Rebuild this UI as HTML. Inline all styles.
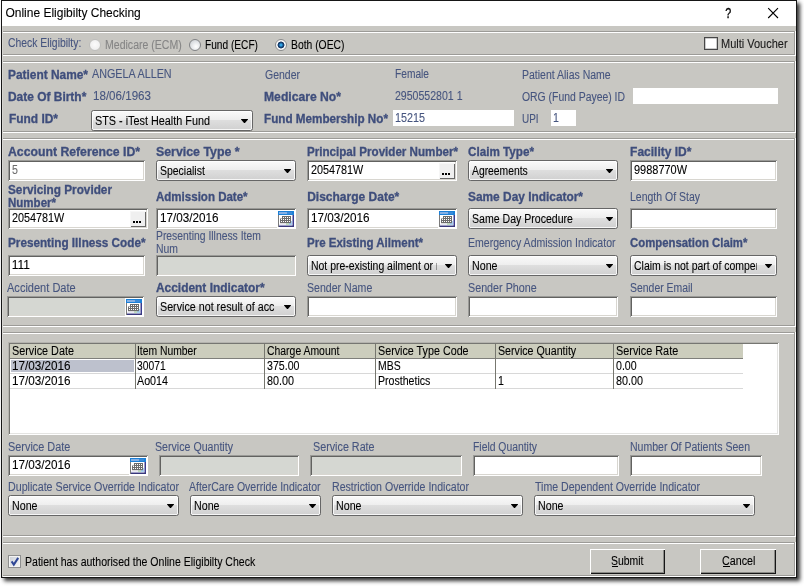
<!DOCTYPE html>
<html lang="en"><head><meta charset="utf-8"><title>Online Eligibilty Checking</title>
<style>
*{margin:0;padding:0;box-sizing:border-box}
html,body{width:804px;height:586px;background:#fff;overflow:hidden}
body{position:relative;font-family:"Liberation Sans",Arial,sans-serif;font-size:12px;line-height:14px;color:#000}
#win{position:absolute;left:1px;top:0;width:796px;height:578px;background:#c8c7c2;border:1px solid #161616;box-shadow:3px 3px 4px rgba(0,0,0,.8)}
#ttl{position:absolute;left:0;top:0;width:794px;height:25px;background:#fff}
#c{position:absolute;left:0;top:0;width:804px;height:586px;will-change:transform}
#c>div,#c>svg,#c>span{position:absolute}
.t{position:absolute;white-space:nowrap;transform-origin:0 0;height:14px;line-height:14px;-webkit-text-stroke:.1px}
.clip{position:absolute;overflow:hidden;height:16px}
.clip .t{left:0;top:0}
.rd{width:12px;height:12px;border-radius:50%;border:1px solid #8b8c8c}
.cb{background:linear-gradient(135deg,#c9cdd5 0,#dfe2e6 45%,#f6f6f6 100%);border:1px solid #8e8f8f;box-shadow:inset 0 0 0 1px #f4f4f4}
.cb2{background:#fff;border:1px solid #474747;box-shadow:inset 0 0 0 .5px #9a9a9a}
.cb svg{position:absolute}
.tb{background:#fff;box-shadow:inset 1px 1px 0 #9a9a97, inset -1px -1px 0 #fff, inset 2px 2px 0 #626260, inset -2px -2px 0 #d8d6d0}
.tb.dis{background:#d5d7d2}
.co{border:1px solid #666;border-radius:2.5px;background:linear-gradient(#fafafa 0,#eeeeee 46%,#dedede 50%,#d0d0d0 100%);box-shadow:inset 0 0 0 1px rgba(255,255,255,.8)}
.co i{position:absolute;width:7.8px;height:4.4px;margin-left:-.4px;background:#000;clip-path:polygon(0 0,100% 0,50% 100%)}
.bt{background:#efefef;box-shadow:inset 1px 1px 0 #f6f6f6, inset -1px -1px 0 #686868}
.bt b{position:absolute;top:10px;width:2px;height:2px;background:#000}
.btn{background:#c8c7c2;box-shadow:inset 1px 1px 0 #fff, inset -1px -1px 0 #161616, inset -2px -2px 0 #8a8a86}
</style></head>
<body>
<div id="win"><div id="ttl"></div></div>
<div id="c">
<span class="t" style="left:5.4px;top:6.3px;">Online Eligibilty Checking</span>
<svg style="left:724px;top:7px" width="60" height="14" viewBox="0 0 60 14">
<text x="1.3" y="11.4" font-family="Liberation Sans, sans-serif" font-size="14.2" fill="#000" stroke="#000" stroke-width=".35" transform="scale(.76 1)" style="transform-origin:1.3px 0">?</text>
<path d="M44.2 1.2 L54 11 M54 1.2 L44.2 11" stroke="#000" stroke-width="1.1" fill="none"/></svg>
<div style="left:3px;top:31px;width:792px;height:1px;background:#9c9b97"></div>
<div style="left:3px;top:32px;width:791px;height:1px;background:#ffffff"></div>
<div style="left:3px;top:54px;width:792px;height:1px;background:#9c9b97"></div>
<div style="left:3px;top:55px;width:793px;height:1px;background:#ffffff"></div>
<div style="left:794px;top:31px;width:1px;height:24px;background:#9c9b97"></div>
<div style="left:795px;top:31px;width:1px;height:25px;background:#ffffff"></div>
<div style="left:3px;top:61px;width:792px;height:1px;background:#9c9b97"></div>
<div style="left:3px;top:62px;width:791px;height:1px;background:#ffffff"></div>
<div style="left:3px;top:131px;width:792px;height:1px;background:#9c9b97"></div>
<div style="left:3px;top:132px;width:793px;height:1px;background:#ffffff"></div>
<div style="left:794px;top:61px;width:1px;height:71px;background:#9c9b97"></div>
<div style="left:795px;top:61px;width:1px;height:72px;background:#ffffff"></div>
<div style="left:3px;top:138px;width:792px;height:1px;background:#9c9b97"></div>
<div style="left:3px;top:139px;width:791px;height:1px;background:#ffffff"></div>
<div style="left:3px;top:325px;width:792px;height:1px;background:#9c9b97"></div>
<div style="left:3px;top:326px;width:793px;height:1px;background:#ffffff"></div>
<div style="left:794px;top:138px;width:1px;height:188px;background:#9c9b97"></div>
<div style="left:795px;top:138px;width:1px;height:189px;background:#ffffff"></div>
<div style="left:3px;top:332px;width:792px;height:1px;background:#9c9b97"></div>
<div style="left:3px;top:333px;width:791px;height:1px;background:#ffffff"></div>
<div style="left:3px;top:535px;width:792px;height:1px;background:#9c9b97"></div>
<div style="left:3px;top:536px;width:793px;height:1px;background:#ffffff"></div>
<div style="left:794px;top:332px;width:1px;height:204px;background:#9c9b97"></div>
<div style="left:795px;top:332px;width:1px;height:205px;background:#ffffff"></div>
<div style="left:3px;top:542px;width:792px;height:1px;background:#9c9b97"></div>
<div style="left:3px;top:543px;width:791px;height:1px;background:#ffffff"></div>
<div style="left:3px;top:575px;width:792px;height:1px;background:#9c9b97"></div>
<div style="left:3px;top:576px;width:793px;height:1px;background:#ffffff"></div>
<div style="left:794px;top:542px;width:1px;height:34px;background:#9c9b97"></div>
<div style="left:795px;top:542px;width:1px;height:35px;background:#ffffff"></div>
<div style="left:2px;top:26px;width:1px;height:551px;background:#d6d5d1"></div>
<span class="t" style="left:8.0px;top:36.3px;transform:scaleX(0.8654);color:#46557f;">Check Eligibilty:</span>
<div class="rd" style="left:89px;top:39px;border-color:#bdbdbb;background:radial-gradient(circle at 50% 45%,#fbfbfb 0,#efefef 70%,#e6e6e6 100%)"></div>
<span class="t" style="left:105.1px;top:38.0px;transform:scaleX(0.8791);color:#858585;">Medicare (ECM)</span>
<div class="rd" style="left:189px;top:39px;border-color:#808284;background:radial-gradient(circle at 60% 65%,#ffffff 0,#e9ebed 40%,#c3c7cc 100%)"></div>
<span class="t" style="left:205.0px;top:38.0px;transform:scaleX(0.8455);">Fund (ECF)</span>
<div class="rd" style="left:275px;top:39px;border-color:#8b8c8c;background:radial-gradient(circle at 50% 50%,#3cb8f0 0,#2b9be0 1.1px,#1a4a7e 2.1px,#123661 3.1px,#fafafa 3.8px,#eeeeee 100%)"></div>
<span class="t" style="left:291.1px;top:38.0px;transform:scaleX(0.8627);">Both (OEC)</span>
<div class="cb2" style="left:704px;top:37px;width:14px;height:13px;"></div>
<span class="t" style="left:721.1px;top:37.4px;transform:scaleX(0.9161);color:#1a1a1a;">Multi Voucher</span>
<span class="t" style="left:7.9px;top:68.0px;transform:scaleX(0.9913);font-weight:bold;-webkit-text-stroke:.3px;color:#3f4e7c;">Patient Name*</span>
<span class="t" style="left:92.1px;top:66.5px;transform:scaleX(0.8972);color:#46557f;">ANGELA ALLEN</span>
<span class="t" style="left:7.9px;top:90.0px;transform:scaleX(0.9951);font-weight:bold;-webkit-text-stroke:.3px;color:#3f4e7c;">Date Of Birth*</span>
<span class="t" style="left:92.6px;top:88.5px;transform:scaleX(0.9657);color:#46557f;">18/06/1963</span>
<span class="t" style="left:9.2px;top:112.0px;transform:scaleX(0.9933);font-weight:bold;-webkit-text-stroke:.3px;color:#3f4e7c;">Fund ID*</span>
<div class="co" style="left:91px;top:110px;width:162px;height:21px"><i style="left:149px;top:8px"></i></div>
<span class="t" style="left:94.7px;top:114.0px;transform:scaleX(0.9027);">STS - iTest Health Fund</span>
<span class="t" style="left:264.9px;top:68.0px;transform:scaleX(0.8743);color:#46557f;">Gender</span>
<span class="t" style="left:264.0px;top:90.0px;transform:scaleX(1.0127);font-weight:bold;-webkit-text-stroke:.3px;color:#3f4e7c;">Medicare No*</span>
<span class="t" style="left:264.0px;top:112.0px;transform:scaleX(0.9737);font-weight:bold;-webkit-text-stroke:.3px;color:#3f4e7c;">Fund Membership No*</span>
<span class="t" style="left:395.1px;top:67.0px;transform:scaleX(0.8497);color:#46557f;">Female</span>
<span class="t" style="left:395.1px;top:89.0px;transform:scaleX(0.8795);color:#46557f;">2950552801 1</span>
<div style="left:393px;top:110px;width:121px;height:16px;background:#fff"></div>
<span class="t" style="left:395.1px;top:111.0px;transform:scaleX(0.8989);color:#46557f;">15215</span>
<span class="t" style="left:521.6px;top:68.0px;transform:scaleX(0.8748);color:#46557f;">Patient Alias Name</span>
<span class="t" style="left:521.6px;top:90.0px;transform:scaleX(0.8676);color:#46557f;">ORG (Fund Payee) ID</span>
<div style="left:633px;top:88px;width:145px;height:16px;background:#fff"></div>
<span class="t" style="left:521.6px;top:112.0px;transform:scaleX(0.8294);color:#46557f;">UPI</span>
<div style="left:551px;top:110px;width:25px;height:16px;background:#fff"></div>
<span class="t" style="left:553.3px;top:111.0px;transform:scaleX(0.8850);color:#46557f;">1</span>
<span class="t" style="left:7.5px;top:145.0px;transform:scaleX(1.0203);font-weight:bold;-webkit-text-stroke:.3px;color:#3f4e7c;">Account Reference ID*</span>
<div class="tb" style="left:8px;top:160px;width:137px;height:21px;"></div>
<span class="t" style="left:11.8px;top:163.3px;transform:scaleX(0.8850);color:#6d6d6d;">5</span>
<span class="t" style="left:155.6px;top:145.0px;transform:scaleX(1.0299);font-weight:bold;-webkit-text-stroke:.3px;color:#3f4e7c;">Service Type *</span>
<div class="co" style="left:156px;top:160px;width:140px;height:21px"><i style="left:127px;top:8px"></i></div>
<span class="t" style="left:159.7px;top:164.0px;transform:scaleX(0.8723);">Specialist</span>
<span class="t" style="left:307.2px;top:145.0px;transform:scaleX(0.9677);font-weight:bold;-webkit-text-stroke:.3px;color:#3f4e7c;">Principal Provider Number*</span>
<div class="tb" style="left:307px;top:160px;width:150px;height:21px;"></div>
<span class="t" style="left:310.7px;top:163.0px;transform:scaleX(0.9010);">2054781W</span>
<div class="bt" style="left:439px;top:163px;width:16px;height:16px;"><b style="left:3px"></b><b style="left:6px"></b><b style="left:9px"></b></div>
<span class="t" style="left:468.2px;top:145.0px;transform:scaleX(0.9733);font-weight:bold;-webkit-text-stroke:.3px;color:#3f4e7c;">Claim Type*</span>
<div class="co" style="left:468px;top:160px;width:150px;height:21px"><i style="left:137px;top:8px"></i></div>
<span class="t" style="left:471.7px;top:164.0px;transform:scaleX(0.8624);">Agreements</span>
<span class="t" style="left:630.1px;top:145.0px;font-weight:bold;-webkit-text-stroke:.3px;color:#3f4e7c;">Facility ID*</span>
<div class="tb" style="left:630px;top:160px;width:147px;height:21px;"></div>
<span class="t" style="left:633.6px;top:163.0px;transform:scaleX(0.9131);">9988770W</span>
<span class="t" style="left:7.5px;top:183.0px;transform:scaleX(0.9807);font-weight:bold;-webkit-text-stroke:.3px;color:#3f4e7c;">Servicing Provider</span>
<span class="t" style="left:7.5px;top:195.7px;transform:scaleX(0.9597);font-weight:bold;-webkit-text-stroke:.3px;color:#3f4e7c;">Number*</span>
<div class="tb" style="left:8px;top:208px;width:140px;height:21px;"></div>
<span class="t" style="left:11.8px;top:211.0px;transform:scaleX(0.9010);">2054781W</span>
<div class="bt" style="left:130px;top:211px;width:16px;height:16px;"><b style="left:3px"></b><b style="left:6px"></b><b style="left:9px"></b></div>
<span class="t" style="left:155.6px;top:190.4px;transform:scaleX(0.9606);font-weight:bold;-webkit-text-stroke:.3px;color:#3f4e7c;">Admission Date*</span>
<div class="tb" style="left:156px;top:208px;width:140px;height:21px;"></div>
<span class="t" style="left:159.7px;top:211.0px;transform:scaleX(0.9757);">17/03/2016</span>
<div style="left:277px;top:210px;width:18px;height:18px;background:#fff"></div>
<svg class="cal" style="left:278px;top:211px" width="16" height="16" viewBox="0 0 16 16">
<rect x="0" y="0" width="16" height="4" fill="#1c80d6"/><rect x="1" y="1" width="8" height="2" fill="#86b0e4"/><rect x="9" y="1" width="5" height="2" fill="#3c8ad8"/>
<rect x="0" y="4" width="1" height="12" fill="#7a7a7a"/><rect x="1" y="4" width="13" height="10" fill="#fff"/>
<rect x="14.5" y="4" width="1.5" height="12" fill="#3a3a8e"/><rect x="1" y="14.4" width="15" height="1.6" fill="#38387c"/><rect x="1" y="13.6" width="13.5" height=".8" fill="#c9c9e6"/>
<rect x="11" y="10" width="3" height="4" fill="#a8d0f0"/><rect x="8" y="12.4" width="3" height="1.4" fill="#b4dcb0"/>
<rect x="4" y="5" width="9" height="3" fill="#6c6c6c"/><rect x="2" y="7.5" width="11" height="4.7" fill="#6c6c6c"/>
<g fill="#fff"><rect x="5" y="6" width="1" height="1"/><rect x="7" y="6" width="1" height="1"/><rect x="9" y="6" width="1" height="1"/><rect x="11" y="6" width="1" height="1"/>
<rect x="3" y="8" width="1" height="1"/><rect x="5" y="8" width="1" height="1"/><rect x="7" y="8" width="1" height="1"/><rect x="9" y="8" width="1" height="1"/><rect x="11" y="8" width="1" height="1"/>
<rect x="3" y="10" width="1" height="1"/><rect x="5" y="10" width="1" height="1"/><rect x="7" y="10" width="1" height="1"/><rect x="9" y="10" width="1" height="1"/><rect x="11" y="10" width="1" height="1"/></g></svg>
<span class="t" style="left:307.2px;top:190.4px;font-weight:bold;-webkit-text-stroke:.3px;color:#3f4e7c;">Discharge Date*</span>
<div class="tb" style="left:307px;top:208px;width:150px;height:21px;"></div>
<span class="t" style="left:310.7px;top:211.0px;transform:scaleX(0.9757);">17/03/2016</span>
<div style="left:438px;top:210px;width:18px;height:18px;background:#fff"></div>
<svg class="cal" style="left:439px;top:211px" width="16" height="16" viewBox="0 0 16 16">
<rect x="0" y="0" width="16" height="4" fill="#1c80d6"/><rect x="1" y="1" width="8" height="2" fill="#86b0e4"/><rect x="9" y="1" width="5" height="2" fill="#3c8ad8"/>
<rect x="0" y="4" width="1" height="12" fill="#7a7a7a"/><rect x="1" y="4" width="13" height="10" fill="#fff"/>
<rect x="14.5" y="4" width="1.5" height="12" fill="#3a3a8e"/><rect x="1" y="14.4" width="15" height="1.6" fill="#38387c"/><rect x="1" y="13.6" width="13.5" height=".8" fill="#c9c9e6"/>
<rect x="11" y="10" width="3" height="4" fill="#a8d0f0"/><rect x="8" y="12.4" width="3" height="1.4" fill="#b4dcb0"/>
<rect x="4" y="5" width="9" height="3" fill="#6c6c6c"/><rect x="2" y="7.5" width="11" height="4.7" fill="#6c6c6c"/>
<g fill="#fff"><rect x="5" y="6" width="1" height="1"/><rect x="7" y="6" width="1" height="1"/><rect x="9" y="6" width="1" height="1"/><rect x="11" y="6" width="1" height="1"/>
<rect x="3" y="8" width="1" height="1"/><rect x="5" y="8" width="1" height="1"/><rect x="7" y="8" width="1" height="1"/><rect x="9" y="8" width="1" height="1"/><rect x="11" y="8" width="1" height="1"/>
<rect x="3" y="10" width="1" height="1"/><rect x="5" y="10" width="1" height="1"/><rect x="7" y="10" width="1" height="1"/><rect x="9" y="10" width="1" height="1"/><rect x="11" y="10" width="1" height="1"/></g></svg>
<span class="t" style="left:468.2px;top:190.4px;transform:scaleX(0.9910);font-weight:bold;-webkit-text-stroke:.3px;color:#3f4e7c;">Same Day Indicator*</span>
<div class="co" style="left:468px;top:208px;width:150px;height:21px"><i style="left:137px;top:8px"></i></div>
<span class="t" style="left:471.7px;top:212.0px;transform:scaleX(0.8803);">Same Day Procedure</span>
<span class="t" style="left:630.2px;top:190.4px;transform:scaleX(0.8743);color:#46557f;">Length Of Stay</span>
<div class="tb" style="left:630px;top:208px;width:147px;height:21px;"></div>
<span class="t" style="left:7.7px;top:236.3px;transform:scaleX(0.9771);font-weight:bold;-webkit-text-stroke:.3px;color:#3f4e7c;">Presenting Illness Code*</span>
<div class="tb" style="left:8px;top:255px;width:137px;height:21px;"></div>
<span class="t" style="left:11.8px;top:258.0px;">111</span>
<span class="t" style="left:155.7px;top:229.3px;transform:scaleX(0.8633);color:#46557f;">Presenting Illness Item</span>
<span class="t" style="left:155.7px;top:242.0px;transform:scaleX(0.8681);color:#46557f;">Num</span>
<div class="tb dis" style="left:156px;top:255px;width:140px;height:21px;"></div>
<span class="t" style="left:307.2px;top:236.3px;transform:scaleX(0.9593);font-weight:bold;-webkit-text-stroke:.3px;color:#3f4e7c;">Pre Existing Ailment*</span>
<div class="co" style="left:307px;top:255px;width:150px;height:21px"><i style="left:137px;top:8px"></i></div>
<div class="clip" style="left:310.7px;top:259.0px;width:126.6px"><span class="t" style="transform:scaleX(0.8710);">Not pre-existing ailment or not applicable</span></div>
<span class="t" style="left:468.3px;top:236.3px;transform:scaleX(0.8776);color:#46557f;">Emergency Admission Indicator</span>
<div class="co" style="left:468px;top:255px;width:150px;height:21px"><i style="left:137px;top:8px"></i></div>
<span class="t" style="left:471.7px;top:259.0px;transform:scaleX(0.8889);">None</span>
<span class="t" style="left:630.1px;top:236.3px;transform:scaleX(0.9465);font-weight:bold;-webkit-text-stroke:.3px;color:#3f4e7c;">Compensation Claim*</span>
<div class="co" style="left:630px;top:255px;width:147px;height:21px"><i style="left:134px;top:8px"></i></div>
<div class="clip" style="left:633.7px;top:259.0px;width:123.4px"><span class="t" style="transform:scaleX(0.8730);">Claim is not part of compensation claim</span></div>
<span class="t" style="left:6.9px;top:281.3px;transform:scaleX(0.9194);color:#46557f;">Accident Date</span>
<div class="tb dis" style="left:7px;top:296px;width:137px;height:21px;"></div>
<div style="left:125px;top:298px;width:18px;height:18px;background:#fff"></div>
<svg class="cal" style="left:126px;top:299px" width="16" height="16" viewBox="0 0 16 16">
<rect x="0" y="0" width="16" height="4" fill="#1c80d6"/><rect x="1" y="1" width="8" height="2" fill="#86b0e4"/><rect x="9" y="1" width="5" height="2" fill="#3c8ad8"/>
<rect x="0" y="4" width="1" height="12" fill="#7a7a7a"/><rect x="1" y="4" width="13" height="10" fill="#fff"/>
<rect x="14.5" y="4" width="1.5" height="12" fill="#3a3a8e"/><rect x="1" y="14.4" width="15" height="1.6" fill="#38387c"/><rect x="1" y="13.6" width="13.5" height=".8" fill="#c9c9e6"/>
<rect x="11" y="10" width="3" height="4" fill="#a8d0f0"/><rect x="8" y="12.4" width="3" height="1.4" fill="#b4dcb0"/>
<rect x="4" y="5" width="9" height="3" fill="#6c6c6c"/><rect x="2" y="7.5" width="11" height="4.7" fill="#6c6c6c"/>
<g fill="#fff"><rect x="5" y="6" width="1" height="1"/><rect x="7" y="6" width="1" height="1"/><rect x="9" y="6" width="1" height="1"/><rect x="11" y="6" width="1" height="1"/>
<rect x="3" y="8" width="1" height="1"/><rect x="5" y="8" width="1" height="1"/><rect x="7" y="8" width="1" height="1"/><rect x="9" y="8" width="1" height="1"/><rect x="11" y="8" width="1" height="1"/>
<rect x="3" y="10" width="1" height="1"/><rect x="5" y="10" width="1" height="1"/><rect x="7" y="10" width="1" height="1"/><rect x="9" y="10" width="1" height="1"/><rect x="11" y="10" width="1" height="1"/></g></svg>
<span class="t" style="left:155.6px;top:281.3px;transform:scaleX(0.9931);font-weight:bold;-webkit-text-stroke:.3px;color:#3f4e7c;">Accident Indicator*</span>
<div class="co" style="left:156px;top:296px;width:140px;height:21px"><i style="left:127px;top:8px"></i></div>
<span class="t" style="left:159.7px;top:300.0px;transform:scaleX(0.8933);">Service not result of acc</span>
<span class="t" style="left:307.3px;top:281.3px;transform:scaleX(0.8819);color:#46557f;">Sender Name</span>
<div class="tb" style="left:307px;top:296px;width:150px;height:21px;"></div>
<span class="t" style="left:468.3px;top:281.3px;transform:scaleX(0.8953);color:#46557f;">Sender Phone</span>
<div class="tb" style="left:468px;top:296px;width:150px;height:21px;"></div>
<span class="t" style="left:630.2px;top:281.3px;transform:scaleX(0.8703);color:#46557f;">Sender Email</span>
<div class="tb" style="left:630px;top:296px;width:147px;height:21px;"></div>
<div style="left:8px;top:342px;width:771px;height:93px;background:#fff;box-shadow:inset 1px 1px 0 #b4b3ae, inset -1px -1px 0 #fff, inset 2px 2px 0 #767672, inset -2px -2px 0 #e4e4e2"></div>
<div style="left:10px;top:344px;width:733px;height:14px;background:#cccdbd"></div>
<div style="left:10px;top:358px;width:733px;height:1px;background:#7f7f7b"></div>
<div style="left:10px;top:373px;width:733px;height:1px;background:#d8d8d8"></div>
<div style="left:10px;top:388px;width:733px;height:1px;background:#d8d8d8"></div>
<div style="left:135px;top:344px;width:1px;height:45px;background:#77776f"></div>
<div style="left:264px;top:344px;width:1px;height:45px;background:#77776f"></div>
<div style="left:375px;top:344px;width:1px;height:45px;background:#77776f"></div>
<div style="left:495px;top:344px;width:1px;height:45px;background:#77776f"></div>
<div style="left:613px;top:344px;width:1px;height:45px;background:#77776f"></div>
<div style="left:11px;top:360px;width:123px;height:12px;background:#bdc1cd"></div>
<span class="t" style="left:11.5px;top:344.4px;transform:scaleX(0.9024);">Service Date</span>
<span class="t" style="left:137.2px;top:344.4px;transform:scaleX(0.8622);">Item Number</span>
<span class="t" style="left:266.9px;top:344.4px;transform:scaleX(0.8682);">Charge Amount</span>
<span class="t" style="left:377.6px;top:344.4px;transform:scaleX(0.8955);">Service Type Code</span>
<span class="t" style="left:497.5px;top:344.4px;transform:scaleX(0.8882);">Service Quantity</span>
<span class="t" style="left:615.5px;top:344.4px;transform:scaleX(0.9053);">Service Rate</span>
<span class="t" style="left:11.5px;top:359.4px;transform:scaleX(0.9757);">17/03/2016</span>
<span class="t" style="left:11.5px;top:374.4px;transform:scaleX(0.9757);">17/03/2016</span>
<span class="t" style="left:137.2px;top:359.4px;transform:scaleX(0.8569);">30071</span>
<span class="t" style="left:137.2px;top:374.4px;transform:scaleX(0.8933);">Ao014</span>
<span class="t" style="left:266.9px;top:359.4px;transform:scaleX(0.8855);">375.00</span>
<span class="t" style="left:266.9px;top:374.4px;transform:scaleX(0.8991);">80.00</span>
<span class="t" style="left:377.6px;top:359.4px;transform:scaleX(0.8687);">MBS</span>
<span class="t" style="left:377.6px;top:374.4px;transform:scaleX(0.8828);">Prosthetics</span>
<span class="t" style="left:497.5px;top:374.4px;transform:scaleX(0.8850);">1</span>
<span class="t" style="left:615.5px;top:359.4px;transform:scaleX(0.8862);">0.00</span>
<span class="t" style="left:615.5px;top:374.4px;transform:scaleX(0.8991);">80.00</span>
<span class="t" style="left:8.3px;top:440.0px;transform:scaleX(0.9083);color:#46557f;">Service Date</span>
<div class="tb" style="left:8px;top:455px;width:140px;height:21px;"></div>
<span class="t" style="left:11.8px;top:458.0px;transform:scaleX(0.9757);">17/03/2016</span>
<div style="left:129px;top:457px;width:18px;height:18px;background:#fff"></div>
<svg class="cal" style="left:130px;top:458px" width="16" height="16" viewBox="0 0 16 16">
<rect x="0" y="0" width="16" height="4" fill="#1c80d6"/><rect x="1" y="1" width="8" height="2" fill="#86b0e4"/><rect x="9" y="1" width="5" height="2" fill="#3c8ad8"/>
<rect x="0" y="4" width="1" height="12" fill="#7a7a7a"/><rect x="1" y="4" width="13" height="10" fill="#fff"/>
<rect x="14.5" y="4" width="1.5" height="12" fill="#3a3a8e"/><rect x="1" y="14.4" width="15" height="1.6" fill="#38387c"/><rect x="1" y="13.6" width="13.5" height=".8" fill="#c9c9e6"/>
<rect x="11" y="10" width="3" height="4" fill="#a8d0f0"/><rect x="8" y="12.4" width="3" height="1.4" fill="#b4dcb0"/>
<rect x="4" y="5" width="9" height="3" fill="#6c6c6c"/><rect x="2" y="7.5" width="11" height="4.7" fill="#6c6c6c"/>
<g fill="#fff"><rect x="5" y="6" width="1" height="1"/><rect x="7" y="6" width="1" height="1"/><rect x="9" y="6" width="1" height="1"/><rect x="11" y="6" width="1" height="1"/>
<rect x="3" y="8" width="1" height="1"/><rect x="5" y="8" width="1" height="1"/><rect x="7" y="8" width="1" height="1"/><rect x="9" y="8" width="1" height="1"/><rect x="11" y="8" width="1" height="1"/>
<rect x="3" y="10" width="1" height="1"/><rect x="5" y="10" width="1" height="1"/><rect x="7" y="10" width="1" height="1"/><rect x="9" y="10" width="1" height="1"/><rect x="11" y="10" width="1" height="1"/></g></svg>
<span class="t" style="left:154.9px;top:440.0px;transform:scaleX(0.8859);color:#46557f;">Service Quantity</span>
<div class="tb dis" style="left:159px;top:455px;width:140px;height:21px;"></div>
<span class="t" style="left:313.1px;top:440.0px;transform:scaleX(0.8966);color:#46557f;">Service Rate</span>
<div class="tb dis" style="left:310px;top:455px;width:152px;height:21px;"></div>
<span class="t" style="left:473.1px;top:440.0px;transform:scaleX(0.8643);color:#46557f;">Field Quantity</span>
<div class="tb" style="left:473px;top:455px;width:146px;height:21px;"></div>
<span class="t" style="left:630.1px;top:440.0px;transform:scaleX(0.8776);color:#46557f;">Number Of Patients Seen</span>
<div class="tb" style="left:630px;top:455px;width:132px;height:21px;"></div>
<span class="t" style="left:8.0px;top:480.3px;transform:scaleX(0.8902);color:#46557f;">Duplicate Service Override Indicator</span>
<div class="co" style="left:8px;top:495px;width:171px;height:21px"><i style="left:158px;top:8px"></i></div>
<span class="t" style="left:11.7px;top:499.0px;transform:scaleX(0.8889);">None</span>
<span class="t" style="left:189.3px;top:480.3px;transform:scaleX(0.8763);color:#46557f;">AfterCare Override Indicator</span>
<div class="co" style="left:190px;top:495px;width:131px;height:21px"><i style="left:118px;top:8px"></i></div>
<span class="t" style="left:193.7px;top:499.0px;transform:scaleX(0.8889);">None</span>
<span class="t" style="left:332.3px;top:480.3px;transform:scaleX(0.8816);color:#46557f;">Restriction Override Indicator</span>
<div class="co" style="left:332px;top:495px;width:191px;height:21px"><i style="left:178px;top:8px"></i></div>
<span class="t" style="left:335.7px;top:499.0px;transform:scaleX(0.8889);">None</span>
<span class="t" style="left:534.5px;top:480.3px;transform:scaleX(0.8824);color:#46557f;">Time Dependent Override Indicator</span>
<div class="co" style="left:534px;top:495px;width:221px;height:21px"><i style="left:208px;top:8px"></i></div>
<span class="t" style="left:537.7px;top:499.0px;transform:scaleX(0.8889);">None</span>
<div class="cb" style="left:8px;top:555px;width:13px;height:13px;"><svg width="13" height="13" viewBox="0 0 13 13" style="left:0;top:0"><path d="M2.6 5.4 L4.8 8.6 L9.2 1.9" stroke="#2f4796" stroke-width="2" fill="none"/></svg></div>
<span class="t" style="left:24.8px;top:555.4px;transform:scaleX(0.8781);">Patient has authorised the Online Eligibilty Check</span>
<div class="btn" style="left:590px;top:549px;width:75px;height:25px;"></div>
<div class="btn" style="left:700px;top:549px;width:76px;height:25px;"></div>
<span class="t" style="left:611.3px;top:554.4px;transform:scaleX(0.8673);">Submit</span>
<span class="t" style="left:722.3px;top:554.4px;transform:scaleX(0.8940);">Cancel</span>
<div style="left:612px;top:566px;width:6px;height:1px;background:#000"></div>
<div style="left:723px;top:566px;width:7px;height:1px;background:#000"></div>
</div>
</body></html>
